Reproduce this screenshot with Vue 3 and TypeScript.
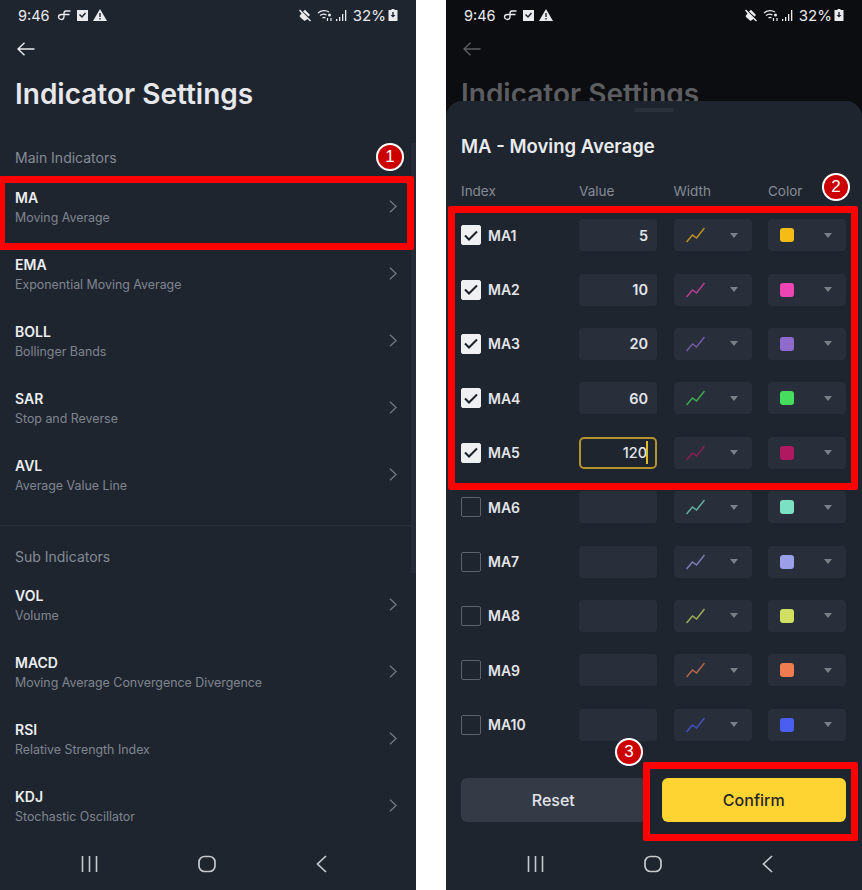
<script setup lang="ts">
interface Indicator {
  code: string
  name: string
}

interface MaRow {
  id: string
  on: boolean
  value: string
  color: string
  focus?: boolean
}

/* ---- Data ---- */
const mainIndicators: Indicator[] = [
  { code: 'MA', name: 'Moving Average' },
  { code: 'EMA', name: 'Exponential Moving Average' },
  { code: 'BOLL', name: 'Bollinger Bands' },
  { code: 'SAR', name: 'Stop and Reverse' },
  { code: 'AVL', name: 'Average Value Line' },
]

const subIndicators: Indicator[] = [
  { code: 'VOL', name: 'Volume' },
  { code: 'MACD', name: 'Moving Average Convergence Divergence' },
  { code: 'RSI', name: 'Relative Strength Index' },
  { code: 'KDJ', name: 'Stochastic Oscillator' },
]

const maRows: MaRow[] = [
  { id: 'MA1', on: true, value: '5', color: '#f6bc16' },
  { id: 'MA2', on: true, value: '10', color: '#ee45b5' },
  { id: 'MA3', on: true, value: '20', color: '#8f6bd0' },
  { id: 'MA4', on: true, value: '60', color: '#46dc5e' },
  { id: 'MA5', on: true, value: '120', color: '#b0185f', focus: true },
  { id: 'MA6', on: false, value: '', color: '#7ce0c4' },
  { id: 'MA7', on: false, value: '', color: '#9b9fe8' },
  { id: 'MA8', on: false, value: '', color: '#d0e060' },
  { id: 'MA9', on: false, value: '', color: '#ee7c50' },
  { id: 'MA10', on: false, value: '', color: '#4a5ef0' },
]

const phones = ['list', 'sheet'] as const
</script>

<template>
  <div class="page">
    <div v-for="phone in phones" :key="phone" class="phone" :class="`phone-${phone}`">
      <!-- Status bar -->
      <div class="status">
        <span class="clock">9:46</span>
        <svg class="st-icon" width="15" height="12" viewBox="0 0 14 12" fill="none" stroke="currentColor" stroke-width="1.3">
          <path d="M13 2H8.500C7 2 6.500 3 6.500 4.500V7.500C6.500 9.500 5.500 10.500 4 10.500S1 9.500 1 8 2.500 5.500 4 5.500H12" />
        </svg>
        <svg class="st-icon" width="11" height="12" viewBox="0 0 11 12">
          <path fill="currentColor" d="M0 1h11v11H0z" />
          <path d="M2.500 5.500 5 8l3.500-4" fill="none" stroke="#1f2530" stroke-width="1.500" />
        </svg>
        <svg class="st-icon" width="14" height="12" viewBox="0 0 14 12">
          <path fill="currentColor" d="M7 0l7 12H0z" />
          <path d="M6.300 4h1.400v4H6.300zM6.300 9h1.400v1.400H6.300z" fill="#1f2530" />
        </svg>
        <span class="st-space"></span>
        <svg class="st-icon" width="14" height="13" viewBox="0 0 14 13">
          <path fill="currentColor" d="M1 1.500 2 .5 13 11.500 12 12.500 9.500 10 6.500 12 2.500 8.500 1.500 7 3.500 4.500zM5 2.500 7 .8 12 6 10.500 7.500z" />
        </svg>
        <svg class="st-icon wifi" width="15" height="12" viewBox="0 0 15 12" fill="none" stroke="currentColor" stroke-width="1.200">
          <path d="M1 4C4 1 9 1 12 3M3 6.500C5 5 8 5 9.500 6M5.500 9c1-.7 2-.7 3 0" />
          <circle cx="12.500" cy="6" r="1.500" fill="currentColor" stroke="none" />
          <path d="M10.500 9v3M14 9v3" />
        </svg>
        <svg class="st-icon signal" width="11" height="11" viewBox="0 0 11 11">
          <path fill="currentColor" d="M0 9h1.300v2H0zM3 7h1.300v4H3zM6 4h1.300v7H6zM9 0h1.300v11H9z" />
        </svg>
        <span class="pct">32%</span>
        <svg class="st-icon" width="10" height="12" viewBox="0 0 10 12">
          <path fill="currentColor" d="M3.500 0h3v1H9.500v11H.5V1h3z" />
          <path fill="#1f2530" d="M4.300 3h1.400v3H7.500L5 8.500 2.500 6h1.800z" />
        </svg>
      </div>

      <!-- Header -->
      <div class="header">
        <svg class="back" width="18" height="14" viewBox="0 0 18 14" fill="none" stroke="currentColor" stroke-width="1.400">
          <path d="M17.500 7H1M7.500.8 1 7l6.500 6.200" />
        </svg>
        <h1 class="title">Indicator Settings</h1>
      </div>

      <!-- Indicator list -->
      <template v-if="phone === 'list'">
        <div class="section">
          <h2 class="section-title">Main Indicators</h2>
          <div v-for="item in mainIndicators" :key="item.code" class="item">
            <div>
              <div class="item-code">{{ item.code }}</div>
              <div class="item-name">{{ item.name }}</div>
            </div>
            <svg class="chev" width="8" height="13" viewBox="0 0 9 15" fill="none" stroke="currentColor" stroke-width="1.600">
              <path d="M1 1l7 6.500L1 14" />
            </svg>
          </div>
        </div>
        <div class="divider"></div>
        <div class="section section-sub">
          <h2 class="section-title">Sub Indicators</h2>
          <div v-for="item in subIndicators" :key="item.code" class="item">
            <div>
              <div class="item-code">{{ item.code }}</div>
              <div class="item-name">{{ item.name }}</div>
            </div>
            <svg class="chev" width="8" height="13" viewBox="0 0 9 15" fill="none" stroke="currentColor" stroke-width="1.600">
              <path d="M1 1l7 6.500L1 14" />
            </svg>
          </div>
        </div>
        <div class="scrollbar"></div>
        <div class="mark box-1"></div>
        <div class="badge badge-1">1</div>
      </template>

      <!-- Bottom sheet -->
      <div v-else class="sheet">
        <div class="grabber"></div>
        <h2 class="sheet-title">MA - Moving Average</h2>
        <div class="ma-grid ma-head">
          <span>Index</span>
          <span>Value</span>
          <span>Width</span>
          <span>Color</span>
        </div>
        <div class="ma-rows">
          <div v-for="row in maRows" :key="row.id" class="ma-grid ma-row">
            <div class="ma-index">
              <span class="check" :class="{ checked: row.on }">
                <svg v-if="row.on" width="14" height="11" viewBox="0 0 14 11" fill="none" stroke="#1c2029" stroke-width="2">
                  <path d="M1 5.500 5 9.500 13 1.500" />
                </svg>
              </span>
              <span class="ma-id">{{ row.id }}</span>
            </div>
            <div class="field value" :class="{ focus: row.focus }">
              {{ row.value }}<span v-if="row.focus" class="caret"></span>
            </div>
            <div class="field picker">
              <svg width="19" height="16" viewBox="0 0 19 16" fill="none" :stroke="row.color" stroke-width="1.500" class="spark">
                <path d="M.5 15 6.500 8 10.500 11 18.500 1" />
              </svg>
              <span class="tri"></span>
            </div>
            <div class="field picker">
              <span class="swatch" :style="{ background: row.color }"></span>
              <span class="tri"></span>
            </div>
          </div>
        </div>
        <div class="actions">
          <button class="btn btn-reset">Reset</button>
          <button class="btn btn-confirm">Confirm</button>
        </div>
        <div class="mark box-2"></div>
        <div class="mark box-3"></div>
        <div class="badge badge-2">2</div>
        <div class="badge badge-3">3</div>
      </div>

      <!-- Android nav -->
      <div class="nav">
        <svg width="17" height="18" viewBox="0 0 17 18" fill="none" stroke="currentColor" stroke-width="1.600">
          <path d="M1.500 1v16M8.500 1v16M15.500 1v16" />
        </svg>
        <svg width="18" height="18" viewBox="0 0 18 18" fill="none" stroke="currentColor" stroke-width="1.700">
          <rect x="1" y="1.500" width="16" height="15" rx="5.500" />
        </svg>
        <svg width="11" height="18" viewBox="0 0 11 18" fill="none" stroke="currentColor" stroke-width="1.700">
          <path d="M10 1 1.500 9 10 17" />
        </svg>
      </div>
    </div>
  </div>
</template>

<style scoped>
.page {
  width: 862px;
  height: 890px;
  display: flex;
  justify-content: space-between;
  background: #fff;
  font-family: Inter, 'Liberation Sans', sans-serif;
  overflow: hidden;
}

.phone {
  position: relative;
  width: 416px;
  height: 890px;
  overflow: hidden;
  display: flex;
  flex-direction: column;
  background: #1f252f;
  color: #e9ebee;
}

.phone-sheet {
  background: #0c0d11;
}

/* Status bar */
.status {
  height: 30px;
  display: flex;
  align-items: center;
  padding: 0 18px;
  flex: none;
}

.clock {
  font-size: 14.500px;
  margin-right: 7px;
}

.st-icon {
  margin-right: 5px;
  flex: none;
}

.st-space {
  flex: 1;
}

.wifi {
  margin-right: 4px;
}

.signal {
  margin-right: 6px;
}

.pct {
  font-size: 15px;
  margin-right: 2px;
}

.status .st-icon:last-child {
  margin-right: 0;
}

/* Header */
.header {
  height: 101px;
  padding: 12px 15px 0;
  flex: none;
}

.back {
  display: block;
  margin-left: 2px;
  color: #e9ebee;
}

.title {
  margin: 22px 0 0;
  font-size: 28px;
  line-height: 33px;
  font-weight: 600;
  color: #e6e8ec;
  white-space: nowrap;
}

.phone-sheet .back {
  color: #5b5d60;
}

.phone-sheet .title {
  color: #5b5d60;
}

/* List */
.section {
  padding: 5px 0 0;
}

.section-title {
  margin: 0 15px 20px;
  font-size: 14px;
  line-height: 20px;
  font-weight: 400;
  color: #858b95;
}

.item {
  height: 67px;
  padding: 3px 19px 0 15px;
  display: flex;
  justify-content: space-between;
  align-items: flex-start;
  box-sizing: border-box;
  margin-top: -3px;
  margin-bottom: 3px;
}

.item-code {
  font-size: 14px;
  line-height: 20px;
  font-weight: 600;
  color: #eceef1;
}

.item-name {
  margin-top: 1px;
  font-size: 12.400px;
  line-height: 18px;
  color: #7f8590;
}

.chev {
  margin-top: 12px;
  color: #70757f;
}

.divider {
  height: 1px;
  margin-top: 2px;
  background: #2a303b;
  flex: none;
}

.section-sub {
  padding-top: 21px;
}

.section-sub .section-title {
  margin-bottom: 19px;
}

.scrollbar {
  position: absolute;
  right: 0;
  top: 143px;
  width: 5px;
  height: 430px;
  background: #262c37;
}

/* Sheet */
.sheet {
  position: absolute;
  left: 0;
  right: 0;
  top: 101px;
  bottom: 0;
  background: #1f252f;
  border-radius: 16px 16px 0 0;
  padding: 0 16px 0 15px;
}

.grabber {
  width: 40px;
  height: 4px;
  margin: 7px auto 0;
  border-radius: 2px;
  background: #2b313b;
}

.sheet-title {
  margin: 22px 0 0;
  font-size: 18.500px;
  line-height: 24px;
  font-weight: 600;
  color: #e9ebee;
}

.ma-grid {
  display: grid;
  grid-template-columns: 101.500px 78px 78px 78px;
  column-gap: 16.500px;
  align-items: center;
}

.ma-head {
  margin-top: 23px;
  height: 20px;
  font-size: 13.500px;
  color: #858b95;
}

.ma-rows {
  margin-top: 7px;
}

.ma-row {
  height: 54.400px;
}

.ma-index {
  display: flex;
  align-items: center;
  gap: 7px;
}

.check {
  width: 20px;
  height: 20px;
  box-sizing: border-box;
  border-radius: 2px;
  border: 1px solid #5d636d;
  display: flex;
  align-items: center;
  justify-content: center;
}

.check.checked {
  background: #eef0f3;
  border-color: #eef0f3;
}

.ma-id {
  font-size: 14px;
  font-weight: 600;
  color: #e3e5e9;
}

.field {
  height: 32px;
  box-sizing: border-box;
  border-radius: 4px;
  background: #292f3a;
  display: flex;
  align-items: center;
}

.value {
  justify-content: flex-end;
  padding-right: 9px;
  font-size: 14.500px;
  font-weight: 600;
  color: #e3e5e9;
}

.value.focus {
  border: 2px solid #b4932f;
  border-radius: 5px;
  background: #1f252f;
  padding-right: 0;
  font-weight: 500;
}

.caret {
  width: 2px;
  height: 23px;
  margin-left: -1px;
  margin-right: 7px;
  background: #e3b92c;
}

.picker {
  justify-content: space-between;
  padding: 0 14px 0 12px;
}

.spark {
  opacity: 0.72;
}

.swatch {
  width: 14px;
  height: 14px;
  border-radius: 3px;
}

.tri {
  width: 0;
  height: 0;
  border-left: 4px solid transparent;
  border-right: 4px solid transparent;
  border-top: 5px solid #7b7f88;
}

.actions {
  display: flex;
  gap: 16px;
  margin-top: 26px;
}

.btn {
  flex: 1;
  height: 44px;
  border: 0;
  border-radius: 6px;
  font-family: inherit;
  font-size: 16px;
  font-weight: 500;
}

.btn-reset {
  background: #343a46;
  color: #e3e5e9;
}

.btn-confirm {
  background: #fdd431;
  color: #25262a;
}

/* Nav bar */
.nav {
  position: absolute;
  left: 0;
  right: 0;
  top: 855px;
  height: 18px;
  padding-left: 81px;
  display: flex;
  gap: 100px;
  color: #c6c9ce;
}

/* Red annotations */
.mark {
  position: absolute;
  box-sizing: border-box;
  border: 7px solid #fe0000;
  border-radius: 2px;
}

.box-1 {
  left: -2px;
  top: 176px;
  width: 416px;
  height: 74px;
}

.box-2 {
  left: 2px;
  top: 105px;
  width: 410px;
  height: 284px;
}

.box-3 {
  left: 197px;
  top: 661px;
  width: 215px;
  height: 79px;
}

.badge {
  position: absolute;
  width: 28px;
  height: 28px;
  box-sizing: border-box;
  border-radius: 50%;
  border: 2px solid #fff;
  background: #cc0000;
  color: #fff;
  font-size: 17px;
  line-height: 24px;
  text-align: center;
  font-family: 'Liberation Sans', sans-serif;
}

.badge-1 {
  left: 376px;
  top: 143px;
}

.badge-2 {
  left: 376px;
  top: 72px;
}

.badge-3 {
  left: 169px;
  top: 637px;
}
</style>
